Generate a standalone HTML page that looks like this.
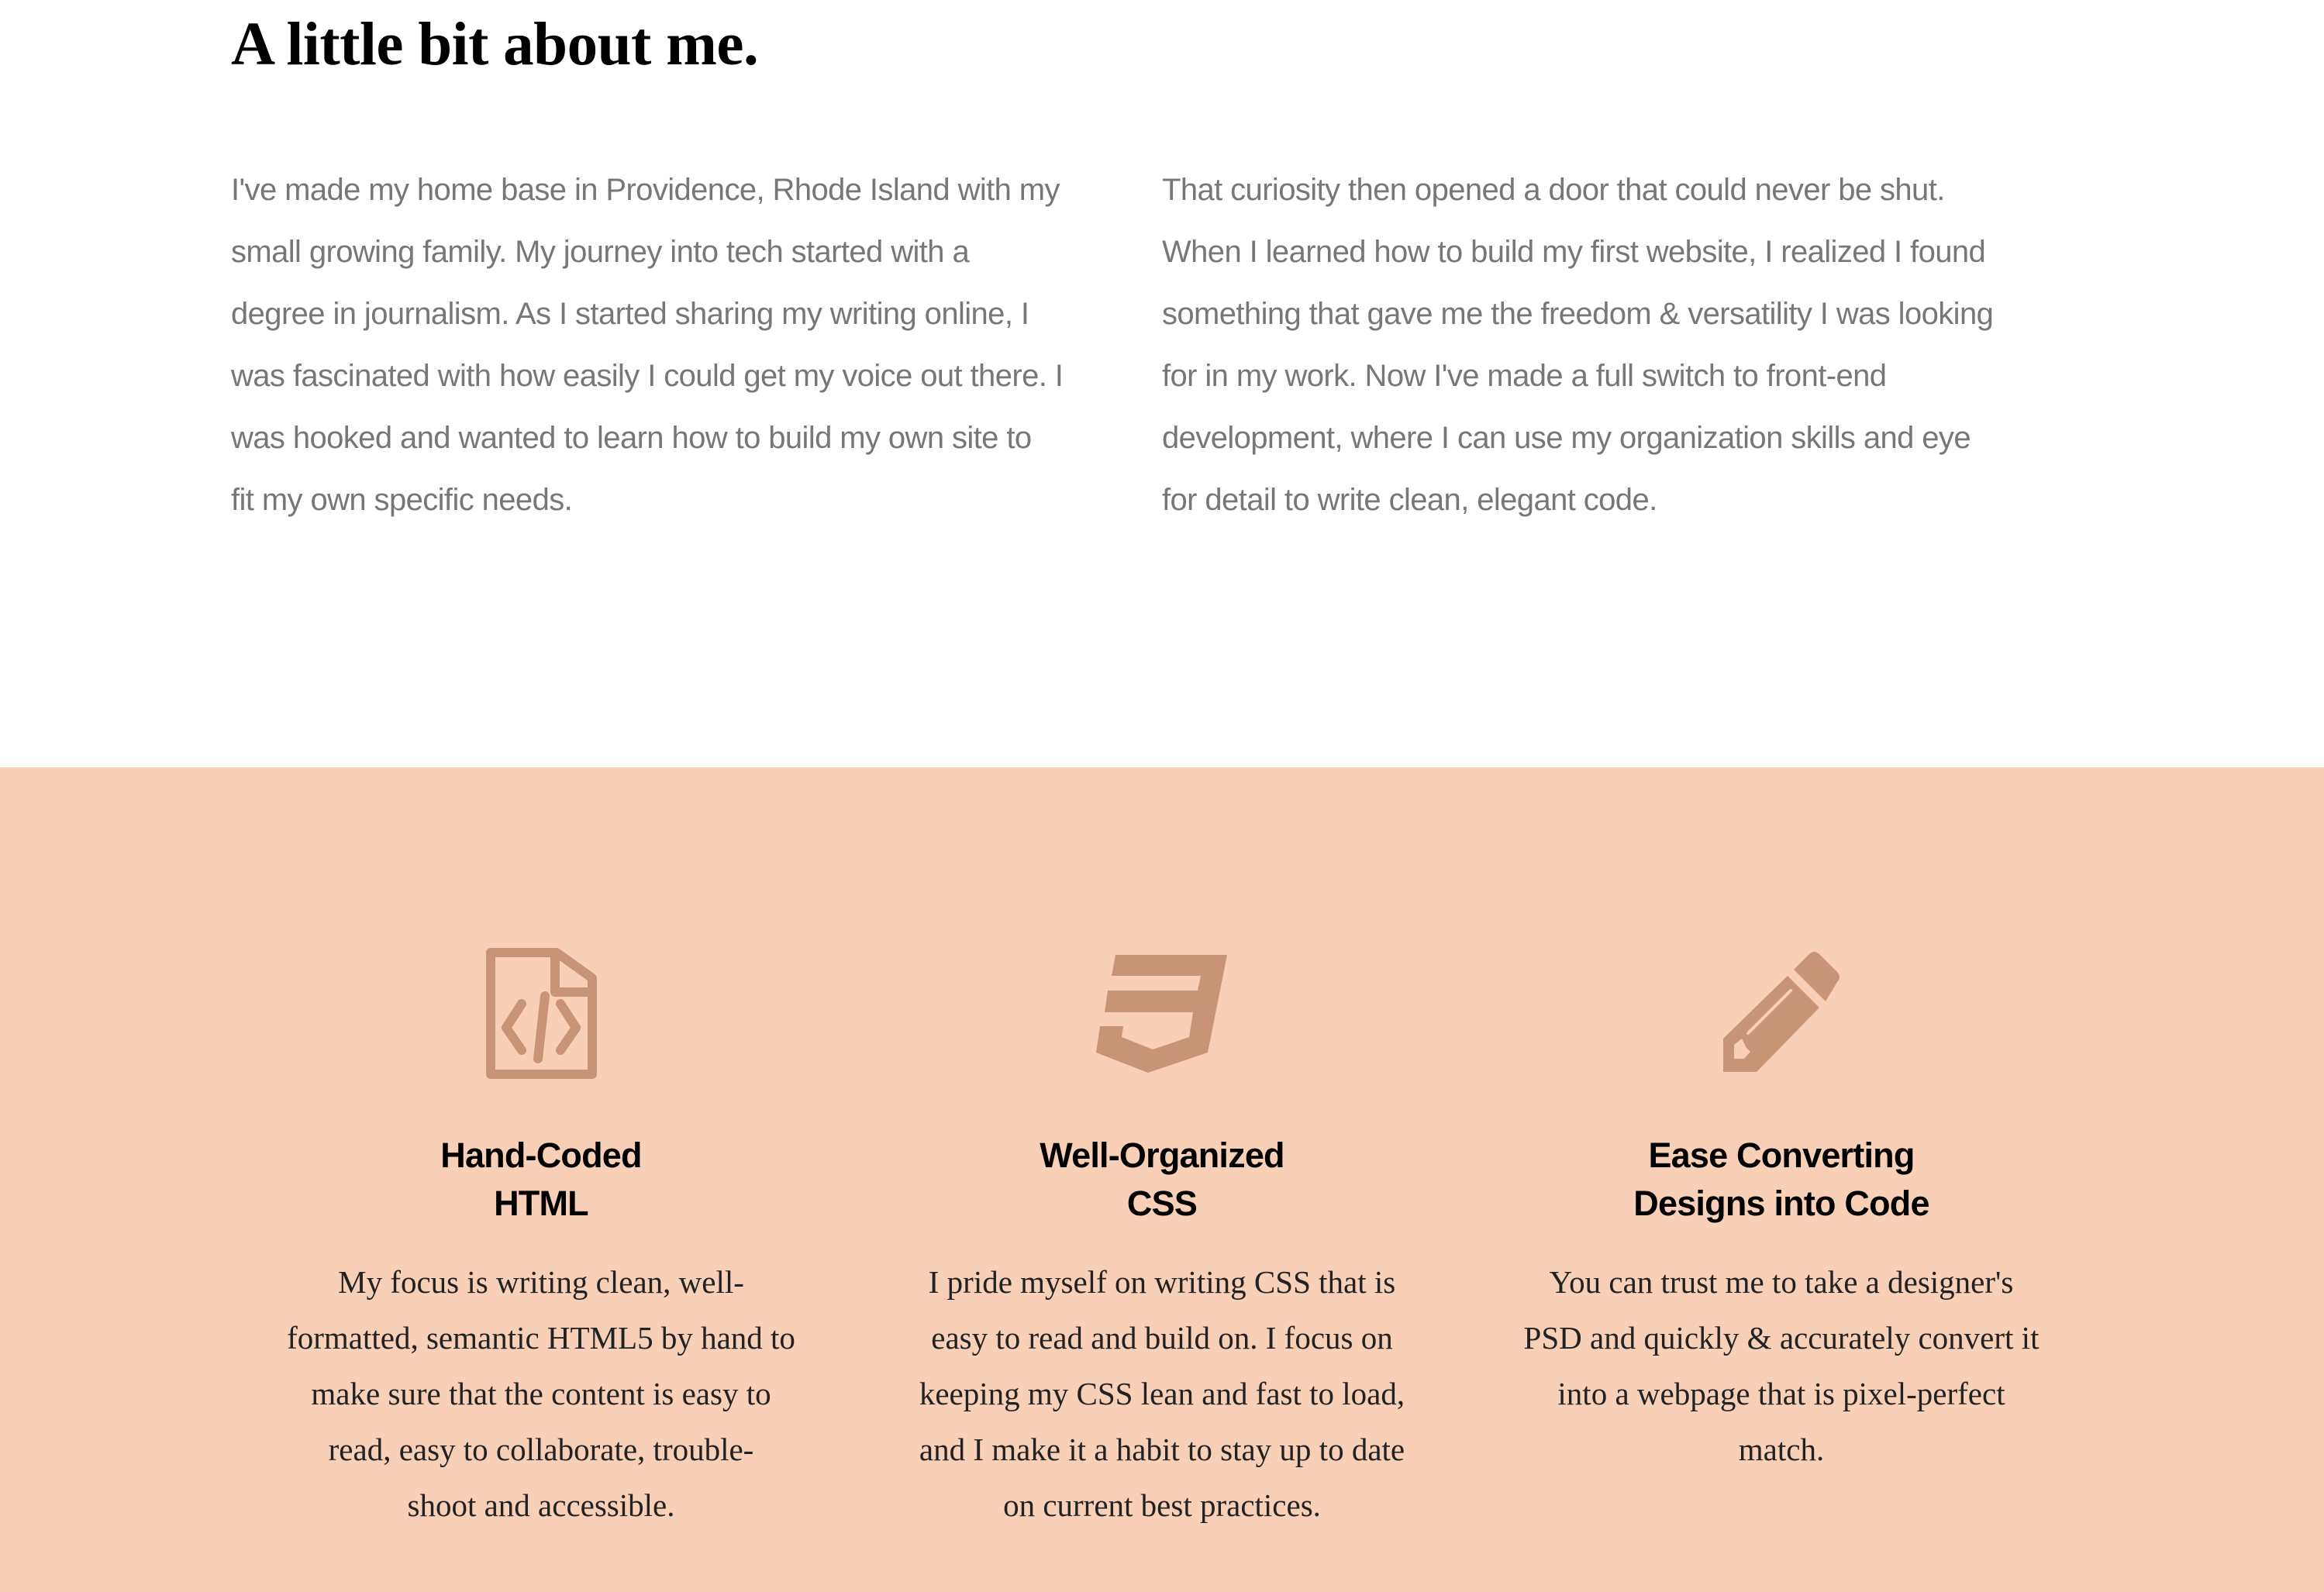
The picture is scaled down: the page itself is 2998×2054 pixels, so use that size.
<!DOCTYPE html>
<html><head><meta charset="utf-8"><style>
html,body{margin:0;padding:0}
body{width:2998px;height:2054px;position:relative;background:#fff;overflow:hidden}
h1{position:absolute;left:298px;top:8px;margin:0;font:bold 79px/100px "Liberation Serif",serif;color:#000;letter-spacing:-0.5px}
.p{position:absolute;top:205px;font:40px/80px "Liberation Sans",sans-serif;color:#777;white-space:nowrap;letter-spacing:-0.6px}
.band{position:absolute;left:0;top:990px;width:2998px;height:1064px;background:#f8cfb7}
.t{position:absolute;top:1460px;width:800px;margin-left:-400px;text-align:center;font:bold 45px/62px "Liberation Sans",sans-serif;color:#000;letter-spacing:-0.8px}
.d{position:absolute;top:1618px;width:800px;margin-left:-400px;text-align:center;font:41px/72px "Liberation Serif",serif;color:#222;white-space:nowrap}
</style></head><body>
<h1>A little bit about me.</h1>
<div class="p" style="left:298px">I've made my home base in Providence, Rhode Island with my<br>small growing family. My journey into tech started with a<br>degree in journalism. As I started sharing my writing online, I<br>was fascinated with how easily I could get my voice out there. I<br>was hooked and wanted to learn how to build my own site to<br>fit my own specific needs.</div>
<div class="p" style="left:1499px">That curiosity then opened a door that could never be shut.<br>When I learned how to build my first website, I realized I found<br>something that gave me the freedom &amp; versatility I was looking<br>for in my work. Now I've made a full switch to front-end<br>development, where I can use my organization skills and eye<br>for detail to write clean, elegant code.</div>
<div class="band"></div>
<svg style="position:absolute;left:0;top:0" width="2998" height="2054" viewBox="0 0 2998 2054">
<g fill="none" stroke="#c89478" stroke-width="12" stroke-linejoin="round" stroke-linecap="round">
<path d="M633 1229 H718 L764 1262 V1386 H633 Z"/>
<path d="M716 1229 V1280 H764"/>
<path d="M673 1295 L653 1326 L673 1355"/>
<path d="M723 1295 L743 1326 L723 1355"/>
<path d="M703 1285 L694 1366"/>
</g>
<path fill="#c89478" d="M1439 1232 L1583 1232 L1558 1358 L1481 1384 L1414 1358 L1419 1324 L1449 1324 L1447 1338 L1487 1354 L1534 1338 L1539 1306 L1425 1306 L1429 1278 L1545 1278 L1549 1259 L1434 1259 Z"/>
<g fill="#c89478">
<path d="M2306 1259 L2347 1300 L2266 1383 L2223 1383 L2223 1340 Z"/>
<path d="M2314 1251 L2334 1231 Q2340 1225 2347 1231 L2370 1254 Q2376 1261 2370 1267 L2355 1292 Z"/>
</g>
<path d="M2255 1333 L2310 1278" stroke="#f8cfb7" stroke-width="4" stroke-linecap="round"/>
<path d="M2237 1348 L2247 1340 L2253 1352 L2258 1357 L2250 1366 L2237 1366 Z" fill="#f8cfb7"/>
</svg>
<div class="t" style="left:698px">Hand-Coded<br>HTML</div>
<div class="t" style="left:1499px">Well-Organized<br>CSS</div>
<div class="t" style="left:2298px">Ease Converting<br>Designs into Code</div>
<div class="d" style="left:698px">My focus is writing clean, well-<br>formatted, semantic HTML5 by hand to<br>make sure that the content is easy to<br>read, easy to collaborate, trouble-<br>shoot and accessible.</div>
<div class="d" style="left:1499px">I pride myself on writing CSS that is<br>easy to read and build on. I focus on<br>keeping my CSS lean and fast to load,<br>and I make it a habit to stay up to date<br>on current best practices.</div>
<div class="d" style="left:2298px">You can trust me to take a designer's<br>PSD and quickly &amp; accurately convert it<br>into a webpage that is pixel-perfect<br>match.</div>
</body></html>
